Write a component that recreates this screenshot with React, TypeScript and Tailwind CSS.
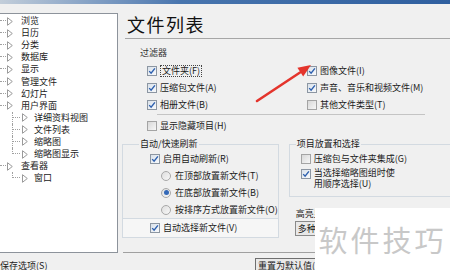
import type { ReactNode } from "react";

const tree = [
  { t: "浏览", l: 0 },
  { t: "日历", l: 0 },
  { t: "分类", l: 0 },
  { t: "数据库", l: 0 },
  { t: "显示", l: 0 },
  { t: "管理文件", l: 0 },
  { t: "幻灯片", l: 0 },
  { t: "用户界面", l: 0 },
  { t: "详细资料视图", l: 1 },
  { t: "文件列表", l: 1 },
  { t: "缩略图", l: 1 },
  { t: "缩略图显示", l: 1, last: true },
  { t: "查看器", l: 0 },
  { t: "窗口", l: 1, last: true },
];

function Tri() {
  return (
    <svg width="6" height="9" viewBox="0 0 6 9" className="shrink-0">
      <path d="M0.5 0.7 L5.3 4.5 L0.5 8.3 Z" fill="none" stroke="#9a9a9a" strokeWidth="1" />
    </svg>
  );
}

function Check({ on }: { on?: boolean }) {
  return (
    <span
      className={
        on
          ? "inline-flex h-[10px] w-[10px] shrink-0 items-center justify-center border border-[#8c96a2] bg-linear-to-br from-[#d9e1ea] to-[#f8fafc]"
          : "inline-flex h-[10px] w-[10px] shrink-0 items-center justify-center border border-[#a4a4a4] bg-linear-to-br from-[#d8d8d8] to-[#f7f7f7]"
      }
    >
      {on && (
        <svg width="8" height="8" viewBox="0 0 8 8">
          <path d="M1.2 4.1 L3.1 6.2 L6.9 1.4" fill="none" stroke="#2c5fae" strokeWidth="1.4" />
        </svg>
      )}
    </span>
  );
}

function Radio({ on }: { on?: boolean }) {
  return (
    <span className="inline-flex h-[10px] w-[10px] shrink-0 items-center justify-center rounded-full border border-[#a8a8a8] bg-linear-to-br from-[#dedede] to-[#f8f8f8]">
      {on && <span className="h-[5px] w-[5px] rounded-full bg-[#3469b8]" />}
    </span>
  );
}

function Row({ children, className = "" }: { children: ReactNode; className?: string }) {
  return <div className={`flex h-[17px] items-center gap-[3px] whitespace-nowrap ${className}`}>{children}</div>;
}

export default function App() {
  return (
    <div className="relative h-[270px] w-[450px] overflow-hidden bg-[#f0f0f0] font-['Noto_Sans_CJK_SC',sans-serif] text-[9px] leading-[12px] text-[#1a1a1a]">
      <div className="h-[4px] bg-linear-to-r from-[#c3ceda] via-[#4875ae] via-40% to-[#2f5f9f]" />

      <div className="mt-[9px] flex h-[240px]">
        {/* tree */}
        <div className="w-[118px] shrink-0 border-t border-r border-b border-[#8d939b] bg-white pt-[1px]">
          {tree.map((n) =>
            n.l === 0 ? (
              <div key={n.t} className="flex h-[12.1px] items-center whitespace-nowrap">
                <div className="h-1/2 w-[6px] self-start border-b border-dotted border-[#a0a0a0]" />
                <span className="ml-[1px]"><Tri /></span>
                <span className="ml-[8px] text-[#222]">{n.t}</span>
              </div>
            ) : (
              <div key={n.t} className="flex h-[12.1px] items-center whitespace-nowrap pl-[12px]">
                <div
                  className={
                    n.last
                      ? "h-1/2 w-[8px] self-start border-b border-l border-dotted border-[#a0a0a0]"
                      : "h-full w-[8px] border-l border-dotted border-[#a0a0a0]"
                  }
                >
                  {!n.last && <div className="h-1/2 border-b border-dotted border-[#a0a0a0]" />}
                </div>
                <span className="ml-[2px]"><Tri /></span>
                <span className="ml-[6px] text-[#222]">{n.t}</span>
              </div>
            )
          )}
        </div>

        {/* page */}
        <div className="flex min-w-0 flex-1 flex-col">
          <div className="h-[25px] pl-[9px] text-[18px] leading-[22px] tracking-[1.5px] text-[#111]">文件列表</div>
          <div className="ml-[7px] h-px bg-[#a6a6a6]" />

          <div className="mt-[8px] pl-[22px] text-[#333]">过滤器</div>
          <div className="mt-[3px] grid grid-cols-[160px_1fr] pl-[29px]">
            <div>
              <Row>
                <Check on />
                <span className="border border-dotted border-[#444] px-[1px] leading-[10px]">文件夹(F)</span>
              </Row>
              <Row>
                <Check on />
                <span>压缩包文件(A)</span>
              </Row>
              <Row>
                <Check on />
                <span>相册文件(B)</span>
              </Row>
            </div>
            <div>
              <Row>
                <Check on />
                <span>图像文件(I)</span>
              </Row>
              <Row>
                <Check on />
                <span>声音、音乐和视频文件(M)</span>
              </Row>
              <Row>
                <Check />
                <span>其他文件类型(T)</span>
              </Row>
            </div>
          </div>
          <div className="ml-[39px] mt-[1px] h-px w-[268px] bg-[#c4c4c4]" />
          <Row className="mt-[2px] pl-[29px]">
            <Check />
            <span>显示隐藏项目(H)</span>
          </Row>

          <div className="mt-[4px] flex items-start">
            <fieldset className="ml-[4px] w-[163px] border border-[#d3dae1]">
              <legend className="ml-[16px] px-[1px] leading-[12px]">自动/快速刷新</legend>
              <Row className="pl-[27px]">
                <Check on />
                <span>启用自动刷新(R)</span>
              </Row>
              <Row className="pl-[38px]">
                <Radio />
                <span className="ml-[1px]">在顶部放置新文件(T)</span>
              </Row>
              <Row className="pl-[38px]">
                <Radio on />
                <span className="ml-[1px]">在底部放置新文件(B)</span>
              </Row>
              <Row className="pl-[38px]">
                <Radio />
                <span className="ml-[1px]">按排序方式放置新文件(O)</span>
              </Row>
              <div className="border-t border-[#d3dae1] bg-[#f6f6f6] pb-[1px]">
                <Row className="pl-[27px]">
                  <Check on />
                  <span>自动选择新文件(V)</span>
                </Row>
              </div>
            </fieldset>

            <div className="ml-[10px] flex w-[170px] shrink-0 flex-col">
              <fieldset className="border border-[#d3dae1] pb-[7px]">
                <legend className="ml-[6px] px-[1px] leading-[12px]">项目放置和选择</legend>
                <Row className="pl-[11px]">
                  <Check />
                  <span>压缩包与文件夹集成(G)</span>
                </Row>
                <div className="flex items-start gap-[3px] pl-[11px]">
                  <span className="mt-[2px]"><Check on /></span>
                  <span className="leading-[11px]">
                    当选择缩略图组时使
                    <br />
                    用顺序选择(U)
                  </span>
                </div>
              </fieldset>
              <div className="mt-[11px] pl-[7px]">高亮显示</div>
              <div className="ml-[6px] mt-[1px] w-[60px] border border-[#8a8a8a] bg-[#e8e8e8] px-[2px] leading-[13px]">多种颜色</div>
            </div>
          </div>

          <div className="mt-auto ml-[5px] h-px bg-[#a0a0a0]" />
        </div>
      </div>

      <div className="flex items-start whitespace-nowrap">
        <span className="mt-[7px] w-[255px] shrink-0 text-[#222]">保存选项(S)</span>
        <span className="mt-[5px] border border-[#6f6f6f] bg-[#e9e9e9] px-[2px] leading-[14px]">重置为默认值(R)</span>
      </div>

      {/* red pointer arrow */}
      <svg className="pointer-events-none absolute left-0 top-0" width="450" height="270" viewBox="0 0 450 270">
        <path d="M257 101 L300 72.5" stroke="#e4342c" strokeWidth="2.6" strokeLinecap="round" />
        <polygon points="311,65 297.4,67.8 303.2,76.6" fill="#e4342c" />
      </svg>

      {/* watermark */}
      <div className="absolute left-[315px] top-[208px] flex h-[62px] w-[135px] items-center justify-center bg-white">
        <span className="text-[29px] leading-none tracking-[3px] text-[#c8c8c8]">软件技巧</span>
      </div>
    </div>
  );
}
